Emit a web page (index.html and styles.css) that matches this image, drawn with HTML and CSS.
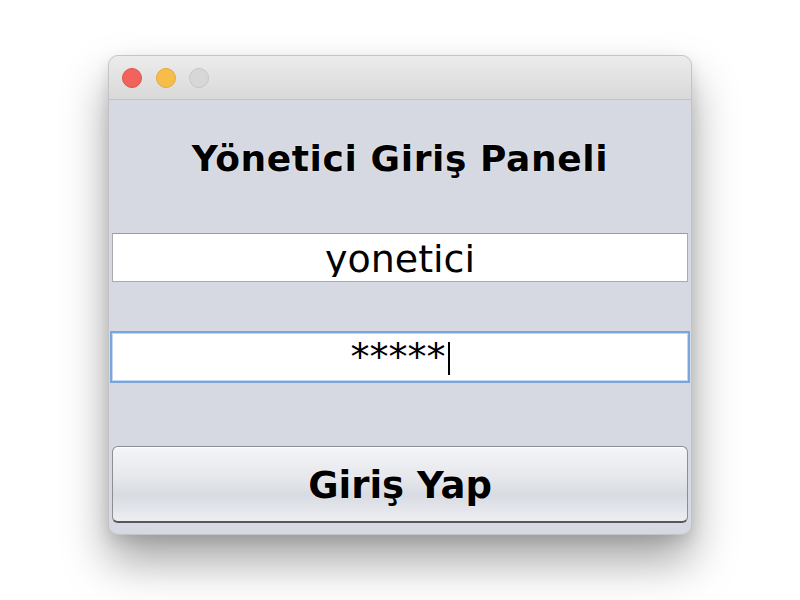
FILE: index.html
```html
<!DOCTYPE html>
<html lang="tr">
<head>
<meta charset="utf-8">
<title>Yönetici Giriş Paneli</title>
<link rel="stylesheet" href="styles.css">
</head>
<body>
<div class="window">
  <div class="titlebar">
    <span class="light red"></span>
    <span class="light yellow"></span>
    <span class="light gray"></span>
  </div>
  <div class="content">
    <h1 class="heading">Yönetici Giriş Paneli</h1>
    <div class="field">
      <div class="field-text">yonetici</div>
    </div>
    <div class="field focused">
      <div class="field-text">*****<span class="caret"></span></div>
    </div>
    <button class="btn" type="button">Giriş Yap</button>
  </div>
</div>
</body>
</html>
```

FILE: styles.css
```css
html, body {
  margin: 0;
  padding: 0;
  background: #ffffff;
}
body {
  width: 800px;
  height: 600px;
  padding-top: 55px;
  box-sizing: border-box;
  font-family: "DejaVu Sans", "Liberation Sans", sans-serif;
}
.window {
  width: 584px;
  height: 480px;
  margin: 0 auto;
  box-sizing: border-box;
  border: 1px solid #c4c4c6;
  border-radius: 10px;
  background: #d6d9e1;
  box-shadow: 0 26px 46px rgba(0, 0, 0, 0.36), 0 6px 14px rgba(0, 0, 0, 0.10);
  overflow: hidden;
  display: flex;
  flex-direction: column;
}
.titlebar {
  height: 43px;
  border-bottom: 1px solid #c2c2c2;
  background: linear-gradient(#ececec, #d9d9d9);
  display: flex;
  align-items: center;
  padding-left: 13px;
  gap: 13.5px;
  flex: none;
}
.light {
  width: 20px;
  height: 20px;
  border-radius: 50%;
  box-sizing: border-box;
  display: block;
}
.red { background: #f0645b; border: 1px solid #de5148; }
.yellow { background: #f7bd4a; border: 1px solid #e3a838; }
.gray { background: #d7d7d7; border: 1px solid #c6c6c6; }

.content {
  flex: 1;
  padding: 31px 3px 0;
  display: flex;
  flex-direction: column;
}
.heading {
  margin: 0;
  height: 56px;
  line-height: 56px;
  text-align: center;
  font-size: 36px;
  font-weight: bold;
  letter-spacing: 0.6px;
  color: #000;
  text-shadow: 0 0 2px rgba(255, 255, 255, 0.7);
}
.field {
  margin-top: 46px;
  height: 49px;
  box-sizing: border-box;
  border: 1px solid #a9abb0;
  border-top-color: #9a9ca1;
  background: #fff;
  padding-bottom: 4px;
}
.field-text {
  height: 43px;
  box-sizing: border-box;
  padding-top: 4px;
  line-height: 43px;
  overflow: hidden;
  text-align: center;
  font-size: 38px;
  color: #000;
}
.field.focused {
  margin: 49px -2px 0;
  height: 52px;
  border: 2px solid #79a7dc;
  box-shadow: inset 0 0 0 1px #c3d6ee;
  padding-bottom: 0;
}
.field.focused .field-text {
  height: 48px;
  padding-top: 0;
  line-height: 48px;
}
.caret {
  display: inline-block;
  width: 2px;
  height: 33px;
  background: #000;
  vertical-align: -5px;
  margin-left: 2px;
}
.btn {
  margin-top: 63px;
  height: 77px;
  box-sizing: border-box;
  border: 1px solid #8c8e93;
  border-bottom: 2px solid #55575b;
  border-radius: 6px;
  background: linear-gradient(#f4f5f7 0%, #e6e8ec 40%, #d8dbe2 65%, #eceef2 100%);
  box-shadow: inset 0 1px 0 #ffffff;
  font-family: "DejaVu Sans", "Liberation Sans", sans-serif;
  font-size: 37px;
  font-weight: bold;
  color: #000;
  padding: 4px 0 0;
  line-height: 70px;
  text-shadow: 0 0 2px rgba(255, 255, 255, 0.7);
}
```
